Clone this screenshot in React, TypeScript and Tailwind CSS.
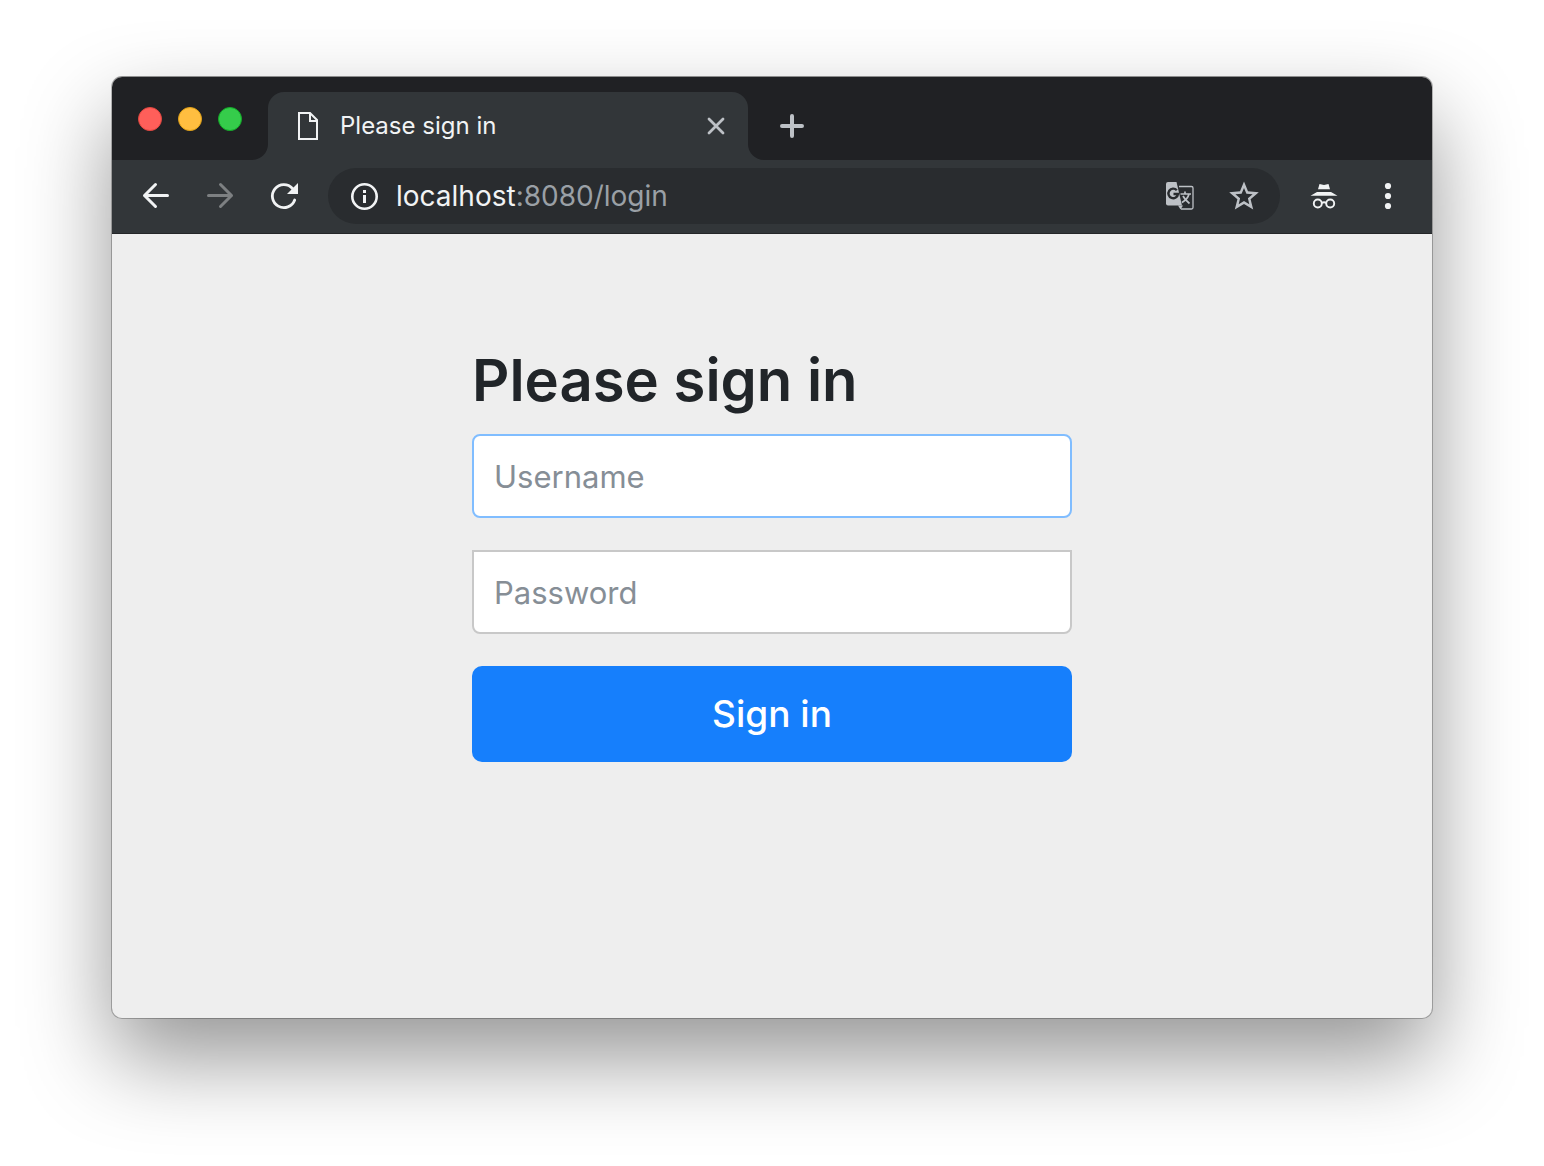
import type { ReactNode } from "react";

function Icon({ children, className = "" }: { children: ReactNode; className?: string }) {
  return (
    <svg viewBox="0 0 32 32" className={`block size-8 shrink-0 ${className}`} fill="none" aria-hidden="true">
      {children}
    </svg>
  );
}

function IconButton({ label, children }: { label: string; children: ReactNode }) {
  return (
    <button type="button" aria-label={label} className="flex size-8 shrink-0 items-center justify-center">
      {children}
    </button>
  );
}

function TrafficLights() {
  return (
    <div className="flex gap-4 self-start pt-[30px]">
      <button type="button" aria-label="Close window" className="size-6 rounded-full border border-[#e2463f] bg-[#ff5f5a]" />
      <button type="button" aria-label="Minimize window" className="size-6 rounded-full border border-[#e1a116] bg-[#ffbe40]" />
      <button type="button" aria-label="Zoom window" className="size-6 rounded-full border border-[#12ac28] bg-[#35cc4b]" />
    </div>
  );
}

function TabFlare({ className }: { className: string }) {
  return (
    <svg viewBox="0 0 16 16" className={`absolute bottom-0 size-4 ${className}`} aria-hidden="true">
      <path d="M16 0v16H0A16 16 0 0 0 16 0z" fill="#323639" />
    </svg>
  );
}

function TabStrip() {
  return (
    <div className="flex h-[83px] items-end bg-[#202124] pl-[26px]">
      <div className="flex h-full">
        <TrafficLights />
      </div>
      <div className="relative ml-[26px] flex h-[68px] w-[480px] items-center rounded-t-2xl bg-[#323639] pr-4 pl-6 text-[#f1f3f4]">
        <TabFlare className="right-full" />
        <TabFlare className="left-full -scale-x-100" />
        <Icon>
          <path d="M7 3h11l7 7v19H7z" stroke="currentColor" strokeWidth="2" />
          <path d="M18 3v8h7" stroke="currentColor" strokeWidth="2" />
        </Icon>
        <span className="ml-4 flex-1 truncate text-2xl">Please sign in</span>
        <button type="button" aria-label="Close tab" className="text-[#bdc1c6]">
          <Icon>
            <path d="M9 9l14 14M23 9L9 23" stroke="currentColor" strokeWidth="2.800" strokeLinecap="round" />
          </Icon>
        </button>
      </div>
      <button type="button" aria-label="New tab" className="ml-7 flex h-[68px] items-center text-[#bdc1c6]">
        <Icon>
          <path d="M16 6v20M6 16h20" stroke="currentColor" strokeWidth="4" strokeLinecap="round" />
        </Icon>
      </button>
    </div>
  );
}

function TranslateIcon() {
  return (
    <Icon>
      <path d="M15 6.500h12.500a1.500 1.500 0 0 1 1.500 1.500v19.500a1.500 1.500 0 0 1-1.500 1.500H17" stroke="#bdc1c6" strokeWidth="1.300" />
      <path d="M4 2h8.500l5.500 23.500H4a2 2 0 0 1-2-2V4a2 2 0 0 1 2-2z" fill="#bdc1c6" />
      <path d="M14 25.500h5l-2.500 4z" fill="#bdc1c6" />
      <path d="M12.800 10.200a4.800 4.800 0 1 0 1.200 3.800H9.500" stroke="#292c2f" strokeWidth="2.400" />
      <path d="M16.500 14h10.500M21 11.500v2.500M25 14c-1 4-3.500 6.500-7 8.500M19 16c1.500 3 4 5.500 6.500 7.500" stroke="#bdc1c6" strokeWidth="1.700" />
    </Icon>
  );
}

function Toolbar() {
  return (
    <div className="flex h-[74px] items-center border-b border-[#242628] bg-[#323639] px-7 pb-px text-[#f1f3f4]">
      <div className="flex gap-8">
        <IconButton label="Back">
          <Icon>
            <path d="M27.500 15.500H4.500M15.500 4.500L4.500 15.500l11 11" stroke="currentColor" strokeWidth="3" strokeLinecap="round" strokeLinejoin="round" />
          </Icon>
        </IconButton>
        <IconButton label="Forward">
          <Icon className="text-[#7d8082]">
            <path d="M4.500 15.500h23M16.500 4.500l11 11-11 11" stroke="currentColor" strokeWidth="3" strokeLinecap="round" strokeLinejoin="round" />
          </Icon>
        </IconButton>
        <IconButton label="Reload">
          <Icon>
            <path d="M26.700 20a11.500 11.500 0 1 1-2.200-11.500" stroke="currentColor" strokeWidth="2.800" strokeLinecap="round" />
            <path d="M30 3v11H19z" fill="currentColor" />
          </Icon>
        </IconButton>
      </div>
      <div className="ml-7 flex h-14 flex-1 items-center rounded-full bg-[#292c2f] px-5">
        <IconButton label="View site information">
          <Icon>
            <circle cx="16.500" cy="16.500" r="12.200" stroke="currentColor" strokeWidth="2.600" />
            <path d="M16.500 15v8M16.500 10v3" stroke="currentColor" strokeWidth="3" />
          </Icon>
        </IconButton>
        <div className="ml-4 flex-1 truncate text-[28px] leading-8 text-[#9aa0a6]">
          <span className="text-[#f1f3f4]">localhost</span>:8080/login
        </div>
        <div className="flex gap-8">
          <IconButton label="Translate this page">
            <TranslateIcon />
          </IconButton>
          <IconButton label="Bookmark this page">
            <Icon>
              <path
                fillRule="evenodd"
                d="M16 1.500l4 9.800 10.800.9-8.200 7 2.600 10.400L16 24.100l-9.200 5.500L9.400 19.200l-8.200-7 10.800-.9zM16 8l-2.400 5.700-6.200.5 4.700 4-1.400 6.100 5.300-3.200 5.300 3.200-1.400-6.100 4.700-4-6.200-.5z"
                fill="#bdc1c6"
              />
            </Icon>
          </IconButton>
        </div>
      </div>
      <div className="ml-7 flex gap-8">
        <IconButton label="Incognito">
          <Icon>
            <path d="M11.500 4l4.500 1 4.500-1L22 9.200H10zM9 12h14l6.500 3.800h-27z" fill="currentColor" />
            <circle cx="9.800" cy="23.500" r="4" stroke="currentColor" strokeWidth="1.900" />
            <circle cx="22.200" cy="23.500" r="4" stroke="currentColor" strokeWidth="1.900" />
            <path d="M13.800 23c1.500-1 3-1 4.400 0" stroke="currentColor" strokeWidth="1.800" />
          </Icon>
        </IconButton>
        <IconButton label="Customize and control">
          <Icon>
            <g fill="currentColor">
              <circle cx="16" cy="6" r="3.100" />
              <circle cx="16" cy="16" r="3.100" />
              <circle cx="16" cy="26" r="3.100" />
            </g>
          </Icon>
        </IconButton>
      </div>
    </div>
  );
}

function SignInForm() {
  return (
    <form className="mx-auto w-full max-w-[600px] pt-[108px]" onSubmit={(e) => e.preventDefault()}>
      <h1 className="mb-4 text-[58px] leading-[76px] font-semibold whitespace-nowrap text-[#212529]">Please sign in</h1>
      <input
        type="text"
        aria-label="Username"
        placeholder="Username"
        className="block h-[84px] w-full rounded-lg border-2 border-[#80bdff] bg-white px-5 text-[31px] outline-none placeholder:text-[#868e96]"
      />
      <input
        type="password"
        aria-label="Password"
        placeholder="Password"
        className="mt-8 block h-[84px] w-full rounded-b-lg border-2 border-[#c8c8c8] bg-white px-5 text-[31px] outline-none placeholder:text-[#868e96]"
      />
      <button type="submit" className="mt-8 block h-24 w-full rounded-[10px] bg-[#167ffc] text-[37px] font-medium text-white">
        Sign in
      </button>
    </form>
  );
}

export default function App() {
  return (
    <div className="flex min-h-screen flex-col bg-white px-28 pt-[77px] pb-[148px] font-['Inter',sans-serif]">
      <div className="flex flex-1 flex-col overflow-hidden rounded-[10px] bg-[#eeeeee] shadow-[0_0_0_1px_rgba(0,0,0,0.25),0_-1px_0_0_rgba(0,0,0,0.2),0_40px_88px_rgba(0,0,0,0.42)]">
        <header>
          <TabStrip />
          <Toolbar />
        </header>
        <main className="flex-1 px-6">
          <SignInForm />
        </main>
      </div>
    </div>
  );
}
